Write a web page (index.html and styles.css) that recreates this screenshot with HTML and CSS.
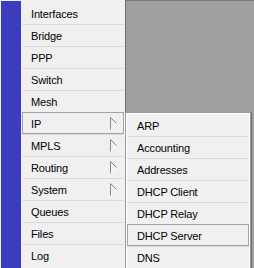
FILE: index.html
```html
<!DOCTYPE html>
<html lang="en">
<head>
    <meta charset="UTF-8">
    <meta name="viewport" content="width=device-width, initial-scale=1.0">
    <title>Menu</title>
    <link rel="stylesheet" href="styles.css">
</head>
<body>
    <div class="app">
        <nav class="nav">
            <div class="brand-bar"></div>
            <ul class="menu">
                <li class="item">Interfaces</li>
                <li class="item">Bridge</li>
                <li class="item">PPP</li>
                <li class="item">Switch</li>
                <li class="item">Mesh</li>
                <li class="item active">IP
                    <svg class="arrow" width="7" height="13" viewBox="0 0 7 13"><path d="M6.5 6.5 L0.5 12.5" stroke="#fff"/><path d="M0.5 0.5 V12.5 M0.5 0.5 L6.5 6.5" stroke="#8a8a8a" fill="none"/></svg>
                </li>
                <li class="item">MPLS
                    <svg class="arrow" width="7" height="13" viewBox="0 0 7 13"><path d="M6.5 6.5 L0.5 12.5" stroke="#fff"/><path d="M0.5 0.5 V12.5 M0.5 0.5 L6.5 6.5" stroke="#8a8a8a" fill="none"/></svg>
                </li>
                <li class="item">Routing
                    <svg class="arrow" width="7" height="13" viewBox="0 0 7 13"><path d="M6.5 6.5 L0.5 12.5" stroke="#fff"/><path d="M0.5 0.5 V12.5 M0.5 0.5 L6.5 6.5" stroke="#8a8a8a" fill="none"/></svg>
                </li>
                <li class="item">System
                    <svg class="arrow" width="7" height="13" viewBox="0 0 7 13"><path d="M6.5 6.5 L0.5 12.5" stroke="#fff"/><path d="M0.5 0.5 V12.5 M0.5 0.5 L6.5 6.5" stroke="#8a8a8a" fill="none"/></svg>
                </li>
                <li class="item">Queues</li>
                <li class="item">Files</li>
                <li class="item">Log</li>
            </ul>
        </nav>
        <div class="workspace">
            <!-- IP submenu popup -->
            <ul class="submenu">
                <li class="item">ARP</li>
                <li class="item">Accounting</li>
                <li class="item">Addresses</li>
                <li class="item">DHCP Client</li>
                <li class="item">DHCP Relay</li>
                <li class="item active">DHCP Server</li>
                <li class="item">DNS</li>
            </ul>
        </div>
    </div>
</body>
</html>
```

FILE: styles.css
```css
body {
    margin: 0;
    padding: 0;
    font-family: "Liberation Sans", Arial, sans-serif;
    font-size: 11px;
    letter-spacing: -0.15px;
    color: #000;
    background-color: #f0f0f0;
    overflow: hidden;
}
.app {
    display: flex;
    width: 254px;
    height: 268px;
}
.nav {
    display: flex;
    width: 125px;
    padding: 1px 0 0 1px;
    box-sizing: border-box;
    flex-shrink: 0;
}
.brand-bar {
    width: 20px;
    background-color: #3c3cbe;
}
.menu,
.submenu {
    list-style: none;
    margin: 0;
    padding: 0;
}
.menu {
    width: 102px;
    margin-left: 1px;
    padding-top: 1px;
}
.item {
    display: flex;
    align-items: center;
    justify-content: space-between;
    height: 22px;
    box-sizing: border-box;
    padding: 1px 6px 0 8px;
    border: 1px solid transparent;
    border-top-color: #dadada;
}
.item:first-child {
    border-top-color: transparent;
}
.item.active {
    border-color: #a3a3a3;
    box-shadow: 1px 1px 0 #fff;
}
.arrow {
    display: block;
    margin-top: -1px;
}
.workspace {
    flex: 1;
    position: relative;
    background-color: #a0a0a0;
    border-top: 1px solid #787878;
    border-left: 1px solid #6e6e6e;
}
.submenu {
    position: absolute;
    left: -1px;
    top: 111px;
    width: 126px;
    height: 160px;
    box-sizing: border-box;
    padding: 1px;
    border: 1px solid #9a9a9a;
    background-color: #fff;
    box-shadow: 1px 0 0 #6e6e6e;
}
.submenu .item {
    padding-left: 9px;
    background-color: #f0f0f0;
}
```
